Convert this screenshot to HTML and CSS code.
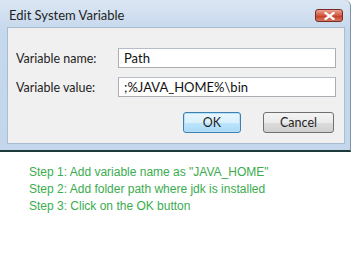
FILE: index.html
```html
<!DOCTYPE html>
<html lang="en">
<head>
  <meta charset="UTF-8">
  <title>Edit System Variable</title>
  <link rel="stylesheet" href="styles.css">
</head>
<body>

  <div class="window">
    <div class="titlebar">
      <span class="title">Edit System Variable</span>
      <button class="close-btn" aria-label="Close">
        <svg width="11" height="8" viewBox="0 0 11 8">
          <path d="M1.5 1 L9.5 7 M9.5 1 L1.5 7" stroke="#fff" stroke-width="2.2" stroke-linecap="square"/>
        </svg>
      </button>
    </div>
    <div class="client">
      <div class="row">
        <label class="label">Variable name:</label>
        <div class="field">Path</div>
      </div>
      <div class="row">
        <label class="label">Variable value:</label>
        <div class="field">;%JAVA_HOME%\bin</div>
      </div>
      <div class="buttons">
        <button class="btn btn-default">OK</button>
        <button class="btn">Cancel</button>
      </div>
    </div>
  </div>

  <div class="steps">
    <p>Step 1: Add variable name as "JAVA_HOME"</p>
    <p>Step 2: Add folder path where jdk is installed</p>
    <p>Step 3: Click on the OK button</p>
  </div>

</body>
</html>
```

FILE: styles.css
```css
body {
  margin: 0;
  background: #fff;
  font-family: Lato, "Open Sans", sans-serif;
}

.window {
  width: 350px;
  background: linear-gradient(#dbe6f3, #c6d8ec 30px, #c3d6eb);
  border-right: 1px solid #7d93ab;
  border-bottom: 2px solid #1c3a3a;
  border-top-right-radius: 6px;
  padding-bottom: 6px;
}

.titlebar {
  height: 27px;
  display: flex;
  align-items: center;
  justify-content: space-between;
  padding: 0 7px 0 9px;
}

.title {
  font-size: 13px;
  color: #1e1e1e;
  margin-top: 3px;
}

.close-btn {
  width: 28px;
  height: 13px;
  margin-top: 4px;
  padding: 0;
  border: 1px solid #7a2a22;
  border-radius: 3px;
  background: linear-gradient(#e8a493, #d2563f 50%, #c43a22 51%, #d47a63);
  display: flex;
  align-items: center;
  justify-content: center;
}

.client {
  margin: 0 5px 0 7px;
  background: #f0f0f0;
  border: 1px solid #a9bcd1;
  padding: 20px 8px 10px 8px;
}

.row {
  display: flex;
  align-items: center;
  margin-bottom: 9px;
}

.label {
  width: 102px;
  font-size: 12.5px;
  color: #1e1e1e;
}

.field {
  flex: 1;
  height: 18px;
  line-height: 18px;
  padding-left: 5px;
  background: #fff;
  border: 1px solid #abadb3;
  border-top-color: #b5bec8;
  font-size: 13px;
  color: #111;
}

.buttons {
  display: flex;
  justify-content: flex-end;
  gap: 22px;
  margin-top: 15px;
  padding-right: 2px;
}

.btn {
  height: 21px;
  padding: 0;
  font-family: inherit;
  font-size: 12.5px;
  color: #1e1e1e;
  border: 1px solid #707070;
  border-radius: 3px;
  background: linear-gradient(#f4f4f4, #ebebeb 50%, #dddddd 51%, #cfcfcf);
  width: 71px;
}

.btn-default {
  width: 58px;
  border-color: #3c7fb1;
  background: linear-gradient(#eaf6fd, #d9f0fc 50%, #bee6fd 51%, #a7d9f5);
  box-shadow: inset 0 0 0 1px #b7e0f6;
}

.steps {
  padding: 12px 0 0 29px;
  font-family: "Liberation Sans", Arial, sans-serif;
  font-size: 12px;
  color: #3aac4e;
}

.steps p {
  margin: 0;
  line-height: 17px;
}
```
